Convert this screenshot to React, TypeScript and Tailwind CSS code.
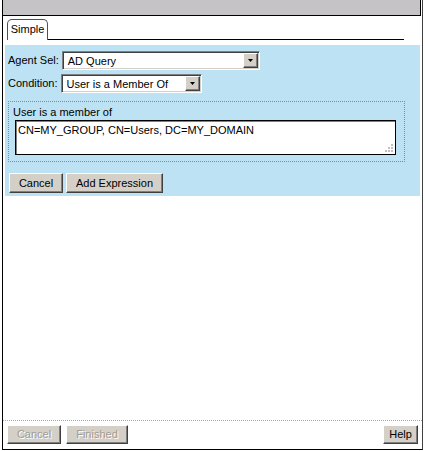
import React from "react";

const raised =
    "bg-[#d4d0c8] border border-t-white border-l-white border-r-[#404040] border-b-[#404040] shadow-[inset_-1px_-1px_0_#808080]";

const Button = ({ label, width, disabled }: { label: string; width: string; disabled?: boolean }) => (
    <div
        className={`${raised} ${width} h-full flex items-center justify-center ${
            disabled ? "text-[#a09c94] [text-shadow:1px_1px_0_#ffffff]" : "text-black"
        }`}
    >
        {label}
    </div>
);

const Select = ({ value, width }: { value: string; width: string }) => (
    <div
        className={`${width} h-[19px] bg-white flex items-center justify-between border border-t-[#808080] border-l-[#808080] border-r-white border-b-white shadow-[inset_1px_1px_0_#404040,inset_-1px_-1px_0_#d4d0c8]`}
    >
        <span className="pl-[5px] pt-[1px]">{value}</span>
        <div className={`${raised} w-[15px] h-[15px] mr-[1px] flex items-center justify-center`}>
            <svg width="7" height="4" viewBox="0 0 7 4">
                <path d="M1 0 H6 L3.5 3 Z" fill="#000" />
            </svg>
        </div>
    </div>
);

const App = () => {
    return (
        <div className="w-[425px] h-[451px] bg-white flex font-['Liberation_Sans',Arial,sans-serif] text-[11px] text-black">
            <div className="ml-[2px] w-[421px] h-[450px] border-l border-b border-r border-l-black border-b-black border-r-[#404040] flex flex-col">
                <div className="h-[16px] bg-[#c6c3c6] border-b border-r border-black mr-[1px]" />

                <div className="h-[24px] flex items-end pl-[4px]">
                    <div className="h-[21px] w-[41px] border-t border-l border-r border-[#505050] rounded-t-[5px] flex items-center justify-center pb-[1px]">
                        Simple
                    </div>
                    <div className="w-[356px] border-b border-black" />
                </div>

                <div className="mt-[5px] ml-[2px] mr-[2px] h-[151px] bg-[#bde2f4] pt-[6px] pl-[3px]">
                    <div className="flex items-center gap-[3px]">
                        <span>Agent Sel:</span>
                        <Select value="AD Query" width="w-[198px]" />
                    </div>
                    <div className="flex items-center gap-[3px] mt-[4px]">
                        <span>Condition:</span>
                        <Select value="User is a Member Of" width="w-[141px]" />
                    </div>

                    <div className="mt-[8px] w-[397px] h-[61px] border border-dotted border-[#7d8ca6] pt-[3px] pl-[4px]">
                        <div className="h-[14px] leading-[14px]">User is a member of</div>
                        <div className="relative ml-[2px] mt-[1px] w-[381px] h-[35px] bg-white border border-black shadow-[inset_1px_1px_0_#808080] pl-[2px] pt-[1px]">
                            CN=MY_GROUP, CN=Users, DC=MY_DOMAIN
                            <svg className="absolute right-[2px] bottom-[2px]" width="9" height="9" viewBox="0 0 9 9">
                                <rect x="7" y="1" width="2" height="2" fill="#c0c0c0" />
                                <rect x="4" y="4" width="2" height="2" fill="#c0c0c0" />
                                <rect x="7" y="4" width="2" height="2" fill="#c0c0c0" />
                                <rect x="1" y="7" width="2" height="2" fill="#c0c0c0" />
                                <rect x="4" y="7" width="2" height="2" fill="#c0c0c0" />
                                <rect x="7" y="7" width="2" height="2" fill="#c0c0c0" />
                            </svg>
                        </div>
                    </div>

                    <div className="mt-[11px] ml-[1px] h-[20px] flex gap-[3px]">
                        <Button label="Cancel" width="w-[54px]" />
                        <Button label="Add Expression" width="w-[97px]" />
                    </div>
                </div>

                <div className="flex-1" />

                <div className="border-t border-dotted border-[#a8a8a8] pt-[4px] pb-[5px] px-[4px]">
                    <div className="h-[19px] flex">
                        <Button label="Cancel" width="w-[54px]" disabled />
                        <div className="ml-[5px]">
                            <Button label="Finished" width="w-[62px]" disabled />
                        </div>
                        <div className="ml-auto">
                            <Button label="Help" width="w-[35px]" />
                        </div>
                    </div>
                </div>
            </div>
        </div>
    );
};

export default App;
